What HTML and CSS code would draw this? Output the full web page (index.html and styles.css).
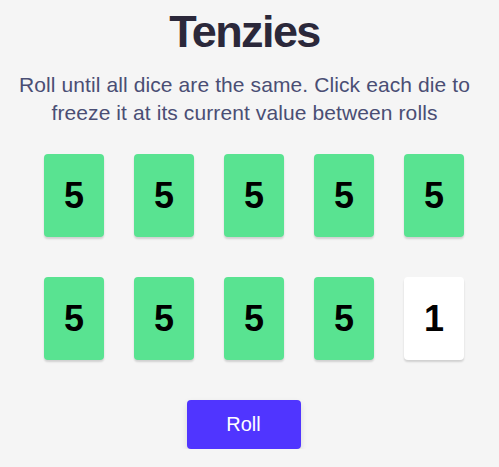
FILE: index.html
```html
<!DOCTYPE html>
<html>
<head>
<meta charset="utf-8">
<link rel="stylesheet" href="styles.css">
</head>
<body>
<main class="game">
  <h1 class="title">Tenzies</h1>
  <p class="instructions">Roll until all dice are the same. Click each die to freeze it at its current value between rolls</p>
  <div class="dice">
    <button class="die held">5</button>
    <button class="die held">5</button>
    <button class="die held">5</button>
    <button class="die held">5</button>
    <button class="die held">5</button>
    <button class="die held">5</button>
    <button class="die held">5</button>
    <button class="die held">5</button>
    <button class="die held">5</button>
    <button class="die">1</button>
  </div>
  <button class="roll">Roll</button>
</main>
</body>
</html>
```
FILE: styles.css
```css
html, body {
  margin: 0;
  padding: 0;
  background: #f5f5f5;
}
body {
  font-family: "Liberation Sans", Arial, sans-serif;
}
.game {
  display: flex;
  flex-direction: column;
  align-items: center;
  padding: 8px 10px 0 0;
}
.title {
  margin: 0;
  font-size: 45px;
  line-height: 48px;
  letter-spacing: -1.6px;
  font-weight: 700;
  color: #2b283a;
}
.instructions {
  margin: 15px 0 0;
  font-size: 21px;
  line-height: 28px;
  letter-spacing: 0.1px;
  color: #4a4e74;
  text-align: center;
  max-width: 470px;
}
.dice {
  margin: 27px 0 0 19px;
  display: grid;
  grid-template-columns: repeat(5, 60px);
  column-gap: 30px;
  row-gap: 40px;
}
.die {
  width: 60px;
  height: 83px;
  border: none;
  border-radius: 4px;
  background: #ffffff;
  box-shadow: 0 2px 2px rgba(0, 0, 0, 0.15);
  font-family: "Liberation Sans", Arial, sans-serif;
  font-size: 36px;
  font-weight: 700;
  color: #000;
  padding: 0;
}
.die.held {
  background: #59e391;
}
.roll {
  margin: 40px 2px 0 0;
  width: 114px;
  height: 49px;
  border: none;
  border-radius: 4px;
  background: #5035ff;
  color: #fff;
  font-family: "Liberation Sans", Arial, sans-serif;
  font-size: 20px;
  box-shadow: 0 3px 6px rgba(0, 0, 0, 0.12);
}
```
